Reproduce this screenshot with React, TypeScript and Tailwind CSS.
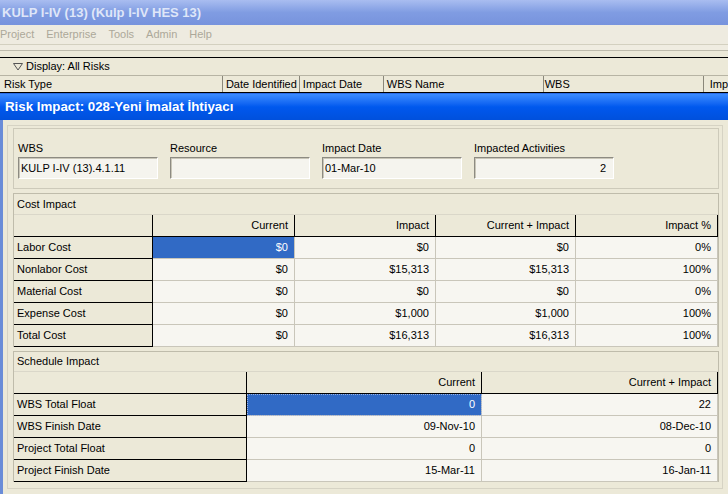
import React from 'react';

const font = "font-['Liberation_Sans',Arial,sans-serif]";

const costRows = [
  { label: 'Labor Cost', cur: '$0', imp: '$0', sum: '$0', pct: '0%' },
  { label: 'Nonlabor Cost', cur: '$0', imp: '$15,313', sum: '$15,313', pct: '100%' },
  { label: 'Material Cost', cur: '$0', imp: '$0', sum: '$0', pct: '0%' },
  { label: 'Expense Cost', cur: '$0', imp: '$1,000', sum: '$1,000', pct: '100%' },
  { label: 'Total Cost', cur: '$0', imp: '$16,313', sum: '$16,313', pct: '100%' },
];

const schedRows = [
  { label: 'WBS Total Float', cur: '0', sum: '22' },
  { label: 'WBS Finish Date', cur: '09-Nov-10', sum: '08-Dec-10' },
  { label: 'Project Total Float', cur: '0', sum: '0' },
  { label: 'Project Finish Date', cur: '15-Mar-11', sum: '16-Jan-11' },
];

const labelCell = 'h-[22px] flex items-center pl-[3px] bg-[#ece9d8] border-r border-b border-black';
const headCell = 'h-[22px] flex items-center justify-end pr-[6px] bg-[#ece9d8] border-r border-b border-black';
const dataCell = 'h-[22px] flex items-center justify-end pr-[6px] bg-[#f7f6f1] border-r border-b border-[#c9c6ba]';
const selCell = 'h-[22px] flex items-center justify-end pr-[6px] bg-[#316ac5] text-white border-r border-b border-[#c9c6ba]';

const Field: React.FC<{ label: string; value: string; right?: boolean }> = ({ label, value, right }) => (
  <div className="w-[140px] flex flex-col">
    <div className="h-[18px] leading-[18px]">{label}</div>
    <div
      className={`h-[22px] flex items-center bg-[#f5f4ee] border-t border-l border-[#8d8b82] border-r border-b border-r-white border-b-white shadow-[inset_1px_1px_0_#c9c6b8] ${
        right ? 'justify-end pr-[7px]' : 'pl-[2px]'
      }`}
    >
      {value}
    </div>
  </div>
);

export default function App() {
  return (
    <div className={`${font} w-[728px] h-[494px] overflow-hidden bg-[#ece9d8] text-[11px] text-black`}>
      {/* window caption */}
      <div className="h-[25px] flex items-center pl-[2px] bg-gradient-to-b from-[#a9bdf0] via-[#809ce2] to-[#7793dd]">
        <span className="text-[13px] font-bold text-[#dfe6f8]">KULP I-IV (13) (Kulp I-IV HES 13)</span>
      </div>

      {/* menu */}
      <div className="h-[20px] flex items-center gap-[12px] text-[#aca899] bg-[#eeebe0] border-b border-[#d3d0c0]">
        <span>Project</span>
        <span>Enterprise</span>
        <span>Tools</span>
        <span>Admin</span>
        <span>Help</span>
      </div>
      <div className="h-[6px] bg-[#efece1] border-b border-[#bebbac]" />
      <div className="h-[6px] bg-[#ece9d8]" />

      {/* risk list */}
      <div className="border-t border-black">
        <div className="h-[18px] flex items-center pl-[13px] border-b border-[#b7b4a4]">
          <svg width="10" height="8" viewBox="0 0 10 8" className="mr-[3px]">
            <path d="M0.5 0.5 L9.5 0.5 L5 7 Z" fill="none" stroke="#555" strokeWidth="1" />
          </svg>
          <span>Display: All Risks</span>
        </div>
        <div className="h-[17px] flex border-b border-black">
          <div className="w-[223px] pl-[4px] border-r border-[#8a877a]">Risk Type</div>
          <div className="w-[77px] pl-[3px] border-r border-[#8a877a]">Date Identified</div>
          <div className="w-[84px] pl-[3px] border-r border-[#8a877a]">Impact Date</div>
          <div className="w-[160px] pl-[3px] border-r border-[#8a877a]">WBS Name</div>
          <div className="w-[160px] pl-[1px] border-r border-[#8a877a]">WBS</div>
          <div className="flex-1 pl-[6px] whitespace-nowrap">Imp</div>
        </div>
      </div>

      {/* dialog caption */}
      <div className="h-[27px] flex items-center pl-[5px] bg-gradient-to-b from-[#3b8cff] via-[#0058ee] to-[#0050dc] border-t border-[#2a6de8]">
        <span className="text-[13.3px] font-bold text-white">Risk Impact: 028-Yeni İmalat İhtiyacı</span>
      </div>

      {/* dialog body */}
      <div className="h-[374px] border-l-[3px] border-[#6a8cd8] pl-[4px] pr-[5px] pt-[5px]">
        <div className="h-[364px] border border-[#d6d3c4] pl-[5px] pr-[3px] pt-[2px] flex flex-col gap-[4px]">
          {/* fields */}
          <div className="h-[61px] border border-[#cdcaba] pl-[4px] pt-[10px] flex gap-[12px]">
            <Field label="WBS" value="KULP I-IV (13).4.1.11" />
            <Field label="Resource" value="" />
            <Field label="Impact Date" value="01-Mar-10" />
            <Field label="Impacted Activities" value="2" right />
          </div>

          {/* cost impact */}
          <div className="border-t border-l border-r border-[#bfbcab]">
            <div className="h-[21px] flex items-center pl-[3px] border-b border-[#dad7c9]">Cost Impact</div>
            <div className="grid grid-cols-[139px_142px_141px_140px_1fr]">
              <div className={labelCell} />
              <div className={headCell}>Current</div>
              <div className={headCell}>Impact</div>
              <div className={headCell}>Current + Impact</div>
              <div className={headCell}>Impact %</div>
              {costRows.map((r, i) => (
                <React.Fragment key={r.label}>
                  <div className={labelCell}>{r.label}</div>
                  <div className={i === 0 ? selCell : dataCell}>{r.cur}</div>
                  <div className={dataCell}>{r.imp}</div>
                  <div className={dataCell}>{r.sum}</div>
                  <div className={dataCell}>{r.pct}</div>
                </React.Fragment>
              ))}
            </div>
          </div>

          {/* schedule impact */}
          <div className="border-t border-l border-r border-[#bfbcab]">
            <div className="h-[20px] flex items-center pl-[3px] border-b border-[#dad7c9]">Schedule Impact</div>
            <div className="grid grid-cols-[233px_235px_1fr]">
              <div className={labelCell} />
              <div className={headCell}>Current</div>
              <div className={headCell}>Current + Impact</div>
              {schedRows.map((r, i) => (
                <React.Fragment key={r.label}>
                  <div className={labelCell}>{r.label}</div>
                  <div
                    className={
                      i === 0
                        ? `${selCell} outline outline-1 outline-dotted outline-offset-[-1px] outline-[#9db3df]`
                        : dataCell
                    }
                  >
                    {r.cur}
                  </div>
                  <div className={dataCell}>{r.sum}</div>
                </React.Fragment>
              ))}
            </div>
          </div>
        </div>
      </div>
    </div>
  );
}
